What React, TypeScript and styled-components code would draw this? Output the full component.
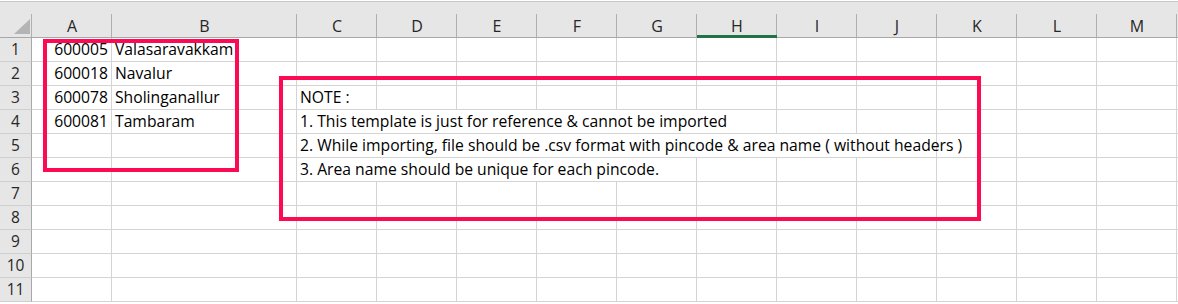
import styled, { createGlobalStyle } from "styled-components";

const GlobalStyle = createGlobalStyle`
  html, body {
    margin: 0;
    padding: 0;
    background: #ffffff;
    overflow: hidden;
  }
`;

const COLS = ["A", "B", "C", "D", "E", "F", "G", "H", "I", "J", "K", "L", "M"];

type CellData = { text: string; span?: number; align?: "left" | "right" };
type RowData = Partial<Record<string, CellData>>;

const rows: RowData[] = [
  { A: { text: "600005", align: "right" }, B: { text: "Valasaravakkam" } },
  { A: { text: "600018", align: "right" }, B: { text: "Navalur" } },
  { A: { text: "600078", align: "right" }, B: { text: "Sholinganallur" }, C: { text: "NOTE :" } },
  {
    A: { text: "600081", align: "right" },
    B: { text: "Tambaram" },
    C: { text: "1. This template is just for reference & cannot be imported", span: 6 },
  },
  {
    C: {
      text: "2. While importing, file should be .csv format with pincode & area name ( without headers )",
      span: 8,
    },
  },
  { C: { text: "3. Area name should be unique for each pincode.", span: 5 } },
  {},
  {},
  {},
  {},
  {},
];

const Sheet = styled.div`
  position: relative;
  display: grid;
  grid-template-columns: 32px 80px 185px repeat(11, 80px) 1fr;
  grid-template-rows: 37px;
  grid-auto-rows: 24px;
  height: 304px;
  box-sizing: border-box;
  padding-top: 1px;
  overflow: hidden;
  font-family: "Open Sans", "Liberation Sans", sans-serif;
  color: #000000;
`;

const HeaderBase = styled.div`
  box-sizing: border-box;
  height: 37px;
  border-top: 1px solid #c8c8c8;
  border-bottom: 1px solid #a8a8a8;
  background: linear-gradient(#b0b0b0, #b0b0b0) right bottom / 1px 23px no-repeat,
    #e6e6e6;
`;

const Corner = styled(HeaderBase)`
  display: flex;
  align-items: flex-end;
  justify-content: flex-end;
  padding: 0 2px 3px 0;
`;

const Triangle = styled.div`
  width: 0;
  height: 0;
  border-left: 16px solid transparent;
  border-bottom: 15px solid #b4b4b4;
`;

const ColHeader = styled(HeaderBase)<{ $selected?: boolean }>`
  display: flex;
  align-items: flex-end;
  justify-content: center;
  font-size: 16px;
  line-height: 22px;
  color: #262626;
  ${({ $selected }) =>
    $selected &&
    `
    border-bottom-color: #217346;
    box-shadow: inset 0 -2px 0 #217346;
  `}
`;

const Filler = styled(HeaderBase)`
  background: #e6e6e6;
`;

const RowHeader = styled.div`
  box-sizing: border-box;
  background: #e6e6e6;
  border-right: 1px solid #a8a8a8;
  border-bottom: 1px solid #cfcfcf;
  text-align: center;
  font-size: 15.5px;
  line-height: 23px;
  color: #262626;
`;

const Cell = styled.div<{ $span?: number; $align?: "left" | "right" }>`
  box-sizing: border-box;
  grid-column: span ${({ $span }) => $span ?? 1};
  border-right: 1px solid #d4d4d4;
  border-bottom: 1px solid #d4d4d4;
  padding: 0 3px;
  font-size: 15.7px;
  line-height: 23px;
  white-space: nowrap;
  text-align: ${({ $align }) => $align ?? "left"};
`;

const Highlight = styled.div<{ $x: number; $y: number; $w: number; $h: number }>`
  position: absolute;
  box-sizing: border-box;
  left: ${({ $x }) => $x}px;
  top: ${({ $y }) => $y}px;
  width: ${({ $w }) => $w}px;
  height: ${({ $h }) => $h}px;
  border: 4px solid #fd0a55;
  pointer-events: none;
`;

function DataRow({ index, row }: { index: number; row: RowData }) {
  const cells = [];
  for (let i = 0; i < COLS.length; i++) {
    const data = row[COLS[i]];
    const span = data?.span ?? 1;
    cells.push(
      <Cell key={COLS[i]} $span={span} $align={data?.align}>
        {data?.text}
      </Cell>
    );
    i += span - 1;
  }
  return (
    <>
      <RowHeader>{index + 1}</RowHeader>
      {cells}
      <Cell />
    </>
  );
}

const App = () => {
  return (
    <>
      <GlobalStyle />
      <Sheet>
        <Corner>
          <Triangle />
        </Corner>
        {COLS.map((c) => (
          <ColHeader key={c} $selected={c === "H"}>
            {c}
          </ColHeader>
        ))}
        <Filler />
        {rows.map((row, i) => (
          <DataRow key={i} index={i} row={row} />
        ))}
        <Highlight $x={43} $y={39} $w={196} $h={133} />
        <Highlight $x={279} $y={76} $w={702} $h={145} />
      </Sheet>
    </>
  );
};

export default App;
